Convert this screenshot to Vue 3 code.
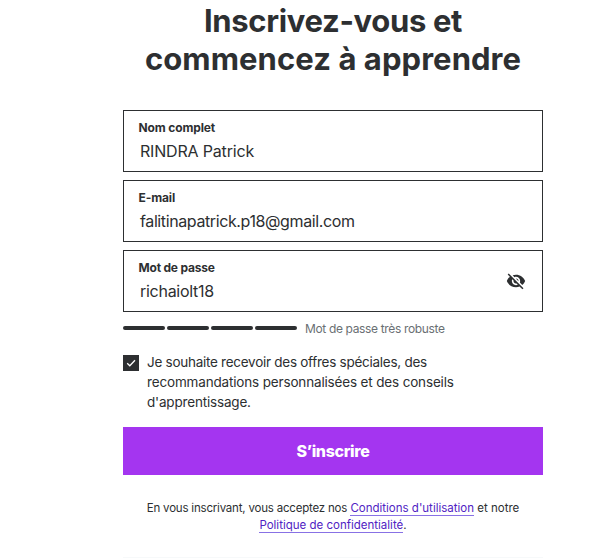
<script setup>
import { ref } from 'vue'

const fields = ref([
  { id: 'name', label: 'Nom complet', value: 'RINDRA Patrick' },
  { id: 'email', label: 'E-mail', value: 'falitinapatrick.p18@gmail.com' },
  { id: 'secret', label: 'Mot de passe', value: 'richaiolt18', toggle: true },
])
</script>

<template>
  <main class="page">
    <div class="column">
      <h1 class="title">
        <span class="title-a">Inscrivez-vous et</span><br />
        <span class="title-b">commencez à apprendre</span>
      </h1>
      <form class="form">
        <div v-for="f in fields" :key="f.id" class="field">
          <div class="field-text">
            <span class="label"><span :class="'label-' + f.id">{{ f.label }}</span></span>
            <span class="value"><span :class="'value-' + f.id">{{ f.value }}</span></span>
          </div>
          <svg v-if="f.toggle" class="eye" viewBox="0 0 24 24">
            <path d="M12 7c2.76 0 5 2.24 5 5 0 .65-.13 1.26-.36 1.83l2.92 2.92c1.51-1.26 2.7-2.89 3.43-4.75-1.73-4.39-6-7.5-11-7.5-1.4 0-2.74.25-3.98.7l2.16 2.16C10.74 7.13 11.35 7 12 7zM2 4.27l2.28 2.28.46.46C3.08 8.3 1.78 10.02 1 12c1.73 4.39 6 7.5 11 7.5 1.55 0 3.03-.3 4.38-.84l.42.42L19.73 22 21 20.73 3.27 3 2 4.27zM7.53 9.8l1.55 1.55c-.05.21-.08.43-.08.65 0 1.66 1.34 3 3 3 .22 0 .44-.03.65-.08l1.55 1.55c-.67.33-1.41.53-2.2.53-2.76 0-5-2.24-5-5 0-.79.2-1.53.53-2.2zm4.31-.78l3.15 3.15.02-.16c0-1.66-1.34-3-3-3l-.17.01z" />
          </svg>
        </div>
        <div class="strength">
          <i v-for="n in 4" :key="n" class="bar"></i>
          <span class="strength-text">Mot de passe très robuste</span>
        </div>
        <div class="offer">
          <span class="box">
            <svg class="check" viewBox="0 0 16 16"><path d="M4.2 8.3 6.8 10.8 12 5.2" /></svg>
          </span>
          <p class="offer-text">
            <span class="offer-a">Je souhaite recevoir des offres spéciales, des</span><br />
            <span class="offer-b">recommandations personnalisées et des conseils</span><br />
            <span class="offer-c">d'apprentissage.</span>
          </p>
        </div>
        <button type="button" class="submit">S’inscrire</button>
      </form>
      <p class="legal">
        <span class="legal-a">En vous inscrivant, vous acceptez nos</span>&nbsp;<a class="link">Conditions d'utilisation</a> et notre<br />
        <a class="link">Politique de confidentialité</a>.
      </p>
      <div class="rule"></div>
    </div>
  </main>
</template>

<style>
body {
  background: #fff;
  overflow: hidden;
}
</style>

<style scoped>
.page {
  height: 558px;
  overflow: hidden;
  color: #2d2f31;
  font-family: Inter, "Liberation Sans", sans-serif;
  white-space: nowrap;
}
.column {
  width: 420px;
  margin-left: 123px;
  padding-top: 2px;
}
.title {
  margin: 0;
  height: 108px;
  font-size: 31px;
  line-height: 38px;
  font-weight: 700;
  text-align: center;
}
.title-a {
  letter-spacing: -0.33px;
}
.title-b {
  letter-spacing: 0.07px;
}
.form {
  display: flex;
  flex-direction: column;
  gap: 8px;
}
.field {
  box-sizing: border-box;
  height: 62px;
  border: 1px solid #2d2f31;
  display: flex;
  justify-content: space-between;
  align-items: center;
  padding: 0 16px 0 14.5px;
}
.field-text {
  display: flex;
  flex-direction: column;
}
.label {
  font-size: 12px;
  line-height: 16px;
  font-weight: 700;
  padding-top: 1px;
  letter-spacing: -0.13px;
}
.label-secret {
  letter-spacing: -0.2px;
}
.value {
  font-size: 16px;
  line-height: 24px;
  padding: 3px 0 0 1.5px;
}
.value-name {
  letter-spacing: -0.18px;
}
.value-email {
  letter-spacing: -0.39px;
}
.value-secret {
  letter-spacing: -0.28px;
}
.eye {
  width: 20px;
  height: 20px;
  fill: #2d2f31;
}
.strength {
  display: flex;
  align-items: center;
  gap: 2px;
  height: 16px;
}
.bar {
  width: 42px;
  height: 4px;
  border-radius: 2px;
  background: #2d2f31;
}
.strength-text {
  margin-left: 6px;
  padding-top: 2px;
  font-size: 12px;
  line-height: 16px;
  letter-spacing: -0.35px;
  color: #6a6f73;
}
.offer {
  display: flex;
  gap: 8px;
  margin-top: 8px;
  height: 67px;
}
.box {
  width: 16px;
  height: 16px;
  margin-top: 3px;
  background: #2d2f31;
}
.check {
  display: block;
  width: 16px;
  height: 16px;
  fill: none;
  stroke: #fff;
  stroke-width: 1.3;
}
.offer-text {
  margin: 0;
  font-size: 13.5px;
  line-height: 20px;
}
.offer-a {
  letter-spacing: -0.27px;
}
.offer-b {
  letter-spacing: -0.16px;
}
.offer-c {
  letter-spacing: -0.18px;
}
.submit {
  height: 48px;
  border: 0;
  padding: 0;
  background: #a435f0;
  color: #fff;
  font: 800 16px/48px Inter, "Liberation Sans", sans-serif;
  letter-spacing: -0.35px;
}
.legal {
  margin: 25px 0 0;
  height: 57px;
  font-size: 11.5px;
  line-height: 17px;
  text-align: center;
}
.legal-a {
  letter-spacing: -0.2px;
}
.link {
  color: #5022c3;
  border-bottom: 1px solid #8871e5;
}
.rule {
  height: 1px;
  background: #f7f9fa;
}
</style>
